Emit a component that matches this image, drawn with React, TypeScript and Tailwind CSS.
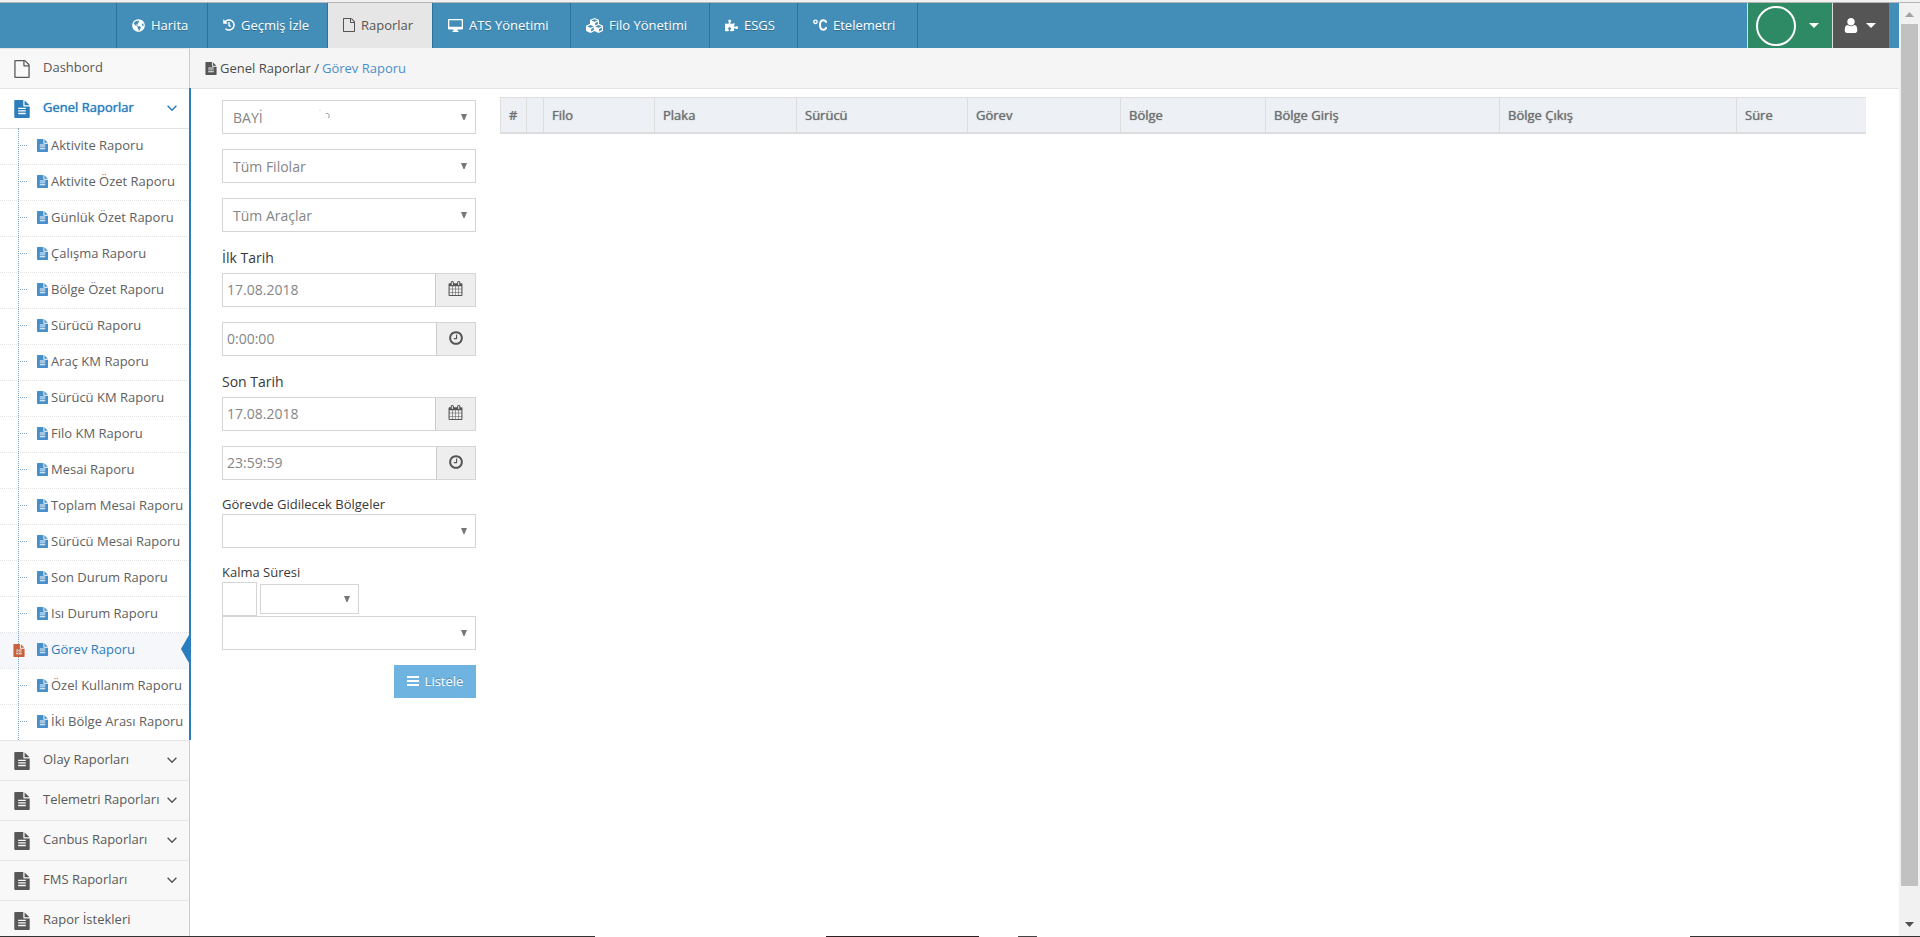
import { useState } from "react";
import type { ReactNode } from "react";
import clsx from "clsx";
import { FaCubes, FaGlobeAmericas, FaHistory, FaPuzzlePiece } from "react-icons/fa";

const paths = {
  fileText:
    "M1596 476q14 14 28 36h-472v-472q22 14 36 28zm-476 164h544v1056q0 40-28 68t-68 28h-1344q-40 0-68-28t-28-68v-1600q0-40 28-68t68-28h800v544q0 40 28 68t68 28zm160 736v-64q0-14-9-23t-23-9h-704q-14 0-23 9t-9 23v64q0 14 9 23t23 9h704q14 0 23-9t9-23zm0-256v-64q0-14-9-23t-23-9h-704q-14 0-23 9t-9 23v64q0 14 9 23t23 9h704q14 0 23-9t9-23zm0-256v-64q0-14-9-23t-23-9h-704q-14 0-23 9t-9 23v64q0 14 9 23t23 9h704q14 0 23-9t9-23z",
  file: "M1596 380q28 28 48 76t20 88v1152q0 40-28 68t-68 28h-1344q-40 0-68-28t-28-68v-1600q0-40 28-68t68-28h896q40 0 88 20t76 48zm-444-244v376h376q-10-29-22-41l-313-313q-12-12-41-22zm384 1528v-1024h-416q-40 0-68-28t-28-68v-416h-768v1536h1280z",
  calendar:
    "M192 1664h288v-288h-288v288zm352 0h320v-288h-320v288zm-352-352h288v-320h-288v320zm352 0h320v-320h-320v320zm-352-384h288v-288h-288v288zm736 736h320v-288h-320v288zm-384-736h320v-288h-320v288zm768 736h288v-288h-288v288zm-384-352h320v-320h-320v320zm-352-864v-288q0-13-9.5-22.5t-22.5-9.5h-64q-13 0-22.5 9.5t-9.5 22.5v288q0 13 9.5 22.5t22.5 9.5h64q13 0 22.5-9.5t9.5-22.5zm736 864h288v-320h-288v320zm-384-384h320v-288h-320v288zm384 0h288v-288h-288v288zm32-480v-288q0-13-9.5-22.5t-22.5-9.5h-64q-13 0-22.5 9.5t-9.5 22.5v288q0 13 9.5 22.5t22.5 9.5h64q13 0 22.5-9.5t9.5-22.5zm384-64v1280q0 52-38 90t-90 38h-1408q-52 0-90-38t-38-90v-1280q0-52 38-90t90-38h128v-96q0-66 47-113t113-47h64q66 0 113 47t47 113v96h384v-96q0-66 47-113t113-47h64q66 0 113 47t47 113v96h128q52 0 90 38t38 90z",
  clock:
    "M1024 544v448q0 14-9 23t-23 9h-320q-14 0-23-9t-9-23v-64q0-14 9-23t23-9h224v-352q0-14 9-23t23-9h64q14 0 23 9t9 23zm416 352q0-148-73-273t-198-198-273-73-273 73-198 198-73 273 73 273 198 198 273 73 273-73 198-198 73-273zm224 0q0 209-103 385.5t-279.5 279.5-385.5 103-385.5-103-279.5-279.5-103-385.5 103-385.5 279.5-279.5 385.5-103 385.5 103 279.5 279.5 103 385.5z",
  user: "M1536 1399q0 109-62.5 187t-150.5 78h-854q-88 0-150.5-78t-62.5-187q0-85 8.5-160.5t31.5-152 58.5-131 94-89 134.5-34.5q131 128 313 128t313-128q76 0 134.5 34.5t94 89 58.5 131 31.5 152 8.5 160.5zm-256-887q0 159-112.5 271.5t-271.5 112.5-271.5-112.5-112.5-271.5 112.5-271.5 271.5-112.5 271.5 112.5 112.5 271.5z",
};

function Icon({ name, className, viewBox = "0 0 1792 1792" }: { name: keyof typeof paths; className: string; viewBox?: string }) {
  return (
    <svg viewBox={viewBox} fill="currentColor" className={clsx("shrink-0", className)} aria-hidden="true">
      <path d={paths[name]} />
    </svg>
  );
}

// file glyphs only fill the middle of the em square
const fileBox = "128 0 1536 1792";

const navItems: { label: string; width: string; icon: ReactNode; active?: boolean }[] = [
  { label: "Harita", width: "w-[91px]", icon: <FaGlobeAmericas className="size-[13px] shrink-0" /> },
  { label: "Geçmiş İzle", width: "w-[120px]", icon: <FaHistory className="size-3 shrink-0" /> },
  {
    label: "Raporlar",
    width: "w-[105px]",
    icon: <Icon name="file" viewBox={fileBox} className="h-[14px] w-3" />,
    active: true,
  },
  {
    label: "ATS Yönetimi",
    width: "w-[138px]",
    icon: (
      <svg viewBox="0 0 15 13" className="h-[13px] w-[15px] shrink-0" fill="currentColor" aria-hidden="true">
        <path fillRule="evenodd" d="M1 0h13a1 1 0 0 1 1 1v8.500a1 1 0 0 1-1 1H9.500V12h1v1h-6v-1h1v-1.500H1a1 1 0 0 1-1-1V1a1 1 0 0 1 1-1zm.300 1.300v6.400h12.400V1.300z" />
      </svg>
    ),
  },
  { label: "Filo Yönetimi", width: "w-[139px]", icon: <FaCubes className="size-[17px] shrink-0" /> },
  { label: "ESGS", width: "w-[88px]", icon: <FaPuzzlePiece className="size-[13px] shrink-0" /> },
  {
    label: "Etelemetri",
    width: "w-[120px]",
    icon: (
      <svg viewBox="0 0 14 12" className="h-3 w-[14px] shrink-0" fill="none" stroke="currentColor" aria-hidden="true">
        <circle cx="2.500" cy="2.800" r="1.700" strokeWidth="1.400" />
        <path d="M13.400 3.800V1.700M13.300 3.600C12.800 2.200 11.800 1.300 10.300 1.300C8.200 1.300 7 3 7 6s1.200 4.700 3.300 4.700c1.600 0 2.700-1 3.200-2.600" strokeWidth="2" />
      </svg>
    ),
  },
];

const generalReports = [
  "Aktivite Raporu",
  "Aktivite Özet Raporu",
  "Günlük Özet Raporu",
  "Çalışma Raporu",
  "Bölge Özet Raporu",
  "Sürücü Raporu",
  "Araç KM Raporu",
  "Sürücü KM Raporu",
  "Filo KM Raporu",
  "Mesai Raporu",
  "Toplam Mesai Raporu",
  "Sürücü Mesai Raporu",
  "Son Durum Raporu",
  "Isı Durum Raporu",
  "Görev Raporu",
  "Özel Kullanım Raporu",
  "İki Bölge Arası Raporu",
];

const otherMenus = [
  { label: "Olay Raporları", expandable: true },
  { label: "Telemetri Raporları", expandable: true },
  { label: "Canbus Raporları", expandable: true },
  { label: "FMS Raporları", expandable: true },
  { label: "Rapor İstekleri", expandable: false },
];

const columns = [
  { label: "#", width: "w-[26px]" },
  { label: "", width: "w-[17px]" },
  { label: "Filo", width: "w-[111px]" },
  { label: "Plaka", width: "w-[142px]" },
  { label: "Sürücü", width: "w-[171px]" },
  { label: "Görev", width: "w-[153px]" },
  { label: "Bölge", width: "w-[145px]" },
  { label: "Bölge Giriş", width: "w-[234px]" },
  { label: "Bölge Çıkış", width: "w-[237px]" },
  { label: "Süre", width: "w-[130px]" },
];

function Caret() {
  return (
    <svg viewBox="0 0 10 5" className="h-[5px] w-[10px]" fill="currentColor" aria-hidden="true">
      <path d="M0 0h10L5 5z" />
    </svg>
  );
}

function Chevron() {
  return (
    <svg viewBox="0 0 10 7" className="h-[7px] w-[10px] shrink-0" fill="none" stroke="currentColor" strokeWidth="1.500" aria-hidden="true">
      <path d="M.6.8 5 5.300 9.400.8" />
    </svg>
  );
}

function TopNav() {
  return (
    <header className="flex h-[45px] shrink-0 bg-[#438eb9] text-[13px] text-white">
      <nav className="ml-[116px] flex border-r border-[#2c7196]">
        {navItems.map((item) => (
          <a
            key={item.label}
            href="#"
            className={clsx(
              "flex items-center gap-[6px] border-l border-[#2c7196] pb-px pl-[15px] whitespace-nowrap",
              item.width,
              item.active ? "bg-[#e6e6e6] text-[#555]" : "[text-shadow:0_1px_0_rgba(0,0,0,0.25)]",
            )}
          >
            {item.icon}
            {item.label}
          </a>
        ))}
      </nav>
      <div className="ml-auto flex pr-[10px]">
        <button aria-label="Firma" className="flex w-[85px] items-center gap-[13px] border-l border-[#ddd] bg-[#2e8965] pl-2">
          <span className="size-10 rounded-full border-2 border-white" />
          <Caret />
        </button>
        <button aria-label="Kullanıcı" className="flex w-[57px] items-center gap-2 border-l border-[#ddd] bg-[#555] pl-[11px]">
          <Icon name="user" viewBox="256 128 1280 1536" className="h-[15px] w-[14px]" />
          <Caret />
        </button>
      </div>
    </header>
  );
}

function Sidebar() {
  const [open, setOpen] = useState(true);

  return (
    <aside className="z-10 w-[191px] shrink-0 text-[13px] text-[#585858]">
      <a href="#" className="flex h-10 w-[190px] items-center gap-[13px] border-t border-r border-t-[#e5e5e5] border-r-[#ccc] bg-[#f8f8f8] pl-[14px]">
        <Icon name="file" viewBox={fileBox} className="h-[18px] w-4" />
        <span className="pb-[3px]">Dashbord</span>
      </a>
      <div className="border-r-2 border-[#2b7dbc] bg-white">
        <button
          onClick={() => setOpen(!open)}
          className="flex h-10 w-full items-center gap-[13px] border-t border-[#e5e5e5] pr-3 pl-[14px] text-[#2b7dbc]"
        >
          <Icon name="fileText" viewBox={fileBox} className="h-[18px] w-4" />
          <span className="flex-1 pb-[3px] text-left [text-shadow:0_0_1px_currentColor]">Genel Raporlar</span>
          <Chevron />
        </button>
        {open && (
          <ul className="relative">
            {generalReports.map((label, i) => {
              const active = label === "Görev Raporu";
              return (
                <li key={label} className={clsx("relative border-t border-[#e2e2e2]", i > 0 && "border-dotted")}>
                  <a
                    href="#"
                    className={clsx(
                      "flex h-[35px] items-center gap-[3px] pb-[3px] pl-[37px] whitespace-nowrap",
                      active ? "bg-[#f5f7fb] text-[#2b7dbc]" : "text-[#616161]",
                    )}
                  >
                    <Icon name="fileText" viewBox={fileBox} className="h-[13px] w-[11px] text-[#478fca]" />
                    {label}
                  </a>
                  {active ? (
                    <>
                      <Icon name="fileText" viewBox={fileBox} className="absolute top-[11px] left-[13px] z-10 h-[13px] w-3 text-[#c86139]" />
                      <svg viewBox="0 0 8 28" className="absolute top-[2px] right-0 h-7 w-2" fill="#2b7dbc" aria-hidden="true">
                        <path d="M8 0v28L0 14z" />
                      </svg>
                    </>
                  ) : (
                    <span className="absolute top-4 left-5 w-[7px] border-t border-dotted border-[#7aa3c4]" />
                  )}
                </li>
              );
            })}
            <li aria-hidden="true" className="absolute inset-y-0 left-[18px] border-l border-dotted border-[#7aa3c4]" />
          </ul>
        )}
      </div>
      {otherMenus.map((menu) => (
        <a
          key={menu.label}
          href="#"
          className="flex h-10 w-[190px] items-center gap-[13px] border-t border-r border-t-[#e5e5e5] border-r-[#ccc] bg-[#f8f8f8] pr-3 pl-[14px]"
        >
          <Icon name="fileText" viewBox={fileBox} className="h-[18px] w-4" />
          <span className="w-0 flex-1 pb-[3px] whitespace-nowrap">{menu.label}</span>
          {menu.expandable && <Chevron />}
        </a>
      ))}
    </aside>
  );
}

function SelectBox({ label, value, small = false, children }: { label: string; value?: string; small?: boolean; children?: ReactNode }) {
  return (
    <div className={clsx("relative", small ? "h-[30px] w-[99px]" : "h-[34px] w-full")}>
      <select
        aria-label={label}
        className="size-full appearance-none border border-[#d5d5d5] bg-white px-[10px] pt-[2px] text-sm text-[#858585]"
      >
        <option>{value}</option>
      </select>
      <svg viewBox="0 0 6 6" className={clsx("pointer-events-none absolute right-[9px] size-[6px]", small ? "top-3" : "top-[14px]")} fill="#777" aria-hidden="true">
        <path d="M0 0h6L3.500 6h-1z" />
      </svg>
      {children}
    </div>
  );
}

function PickerInput({ id, value, icon, label }: { id: string; value: string; icon: "calendar" | "clock"; label?: string }) {
  return (
    <div className="flex h-[34px] border border-[#d5d5d5]">
      <input id={id} aria-label={label} defaultValue={value} className="w-0 flex-1 bg-white px-1 text-sm text-[#858585]" />
      <button
        aria-label="Seç"
        className={clsx(
          "flex items-center justify-center border-l border-[#ccc] bg-[#eee] pb-[3px] text-[#555]",
          icon === "clock" ? "w-[39px]" : "w-10",
        )}
      >
        <Icon name={icon} className={icon === "clock" ? "size-4" : "size-[15px]"} />
      </button>
    </div>
  );
}

function FilterForm() {
  return (
    <form className="w-[254px] shrink-0 pt-[3px] text-[#393939]" onSubmit={(e) => e.preventDefault()}>
      <div className="flex flex-col gap-[15px]">
        <SelectBox label="Bayi" value="BAYİ">
          <svg viewBox="0 0 12 8" className="pointer-events-none absolute top-[10px] left-[97px] h-2 w-3" fill="none" stroke="#999" aria-hidden="true">
            <path d="M0 .5h2" strokeOpacity=".3" />
            <path d="M7 3.500c3-.5 4 1.500 2.500 4.500" />
          </svg>
        </SelectBox>
        <SelectBox label="Filo" value="Tüm Filolar" />
        <SelectBox label="Araç" value="Tüm Araçlar" />
      </div>
      <label htmlFor="startDate" className="mt-4 block pb-[5px] text-sm leading-5">İlk Tarih</label>
      <div className="flex flex-col gap-[15px]">
        <PickerInput id="startDate" value="17.08.2018" icon="calendar" />
        <PickerInput id="startTime" value="0:00:00" icon="clock" label="İlk saat" />
      </div>
      <label htmlFor="endDate" className="mt-4 block pb-[5px] text-sm leading-5">Son Tarih</label>
      <div className="flex flex-col gap-[15px]">
        <PickerInput id="endDate" value="17.08.2018" icon="calendar" />
        <PickerInput id="endTime" value="23:59:59" icon="clock" label="Son saat" />
      </div>
      <p className="mt-[14px] text-[13px] leading-5">Görevde Gidilecek Bölgeler</p>
      <SelectBox label="Görevde Gidilecek Bölgeler" />
      <label htmlFor="duration" className="mt-[14px] block text-[13px] leading-5">Kalma Süresi</label>
      <div className="flex items-center gap-[3px]">
        <input id="duration" className="h-[34px] w-[35px] border border-[#d5d5d5] bg-white px-1 text-sm" />
        <SelectBox label="Süre birimi" small />
      </div>
      <SelectBox label="Süre koşulu" />
      <button className="mt-[15px] ml-auto flex h-[33px] w-[82px] items-center justify-center gap-[6px] bg-[#6fb3e0] pb-px text-[13px] text-white [text-shadow:0_-1px_0_rgba(0,0,0,0.25)]">
        <svg viewBox="0 0 12 10" className="h-[10px] w-3" fill="currentColor" aria-hidden="true">
          <path d="M0 0h12v2H0zM0 4h12v2H0zM0 8h12v2H0z" />
        </svg>
        Listele
      </button>
    </form>
  );
}

function ReportTable() {
  return (
    <div className="min-w-0 flex-1">
      <table className="w-full table-fixed border-separate border-spacing-0 text-[13px] text-[#707070]">
        <thead>
          <tr>
            {columns.map((col, i) => (
              <th
                key={i}
                scope="col"
                className={clsx(
                  "h-[37px] border-t border-b-2 border-l border-[#ddd] bg-[#edf1f6] p-0 pl-2 text-left font-normal whitespace-nowrap [text-shadow:0_0_1px_currentColor]",
                  col.width,
                )}
              >
                {col.label}
              </th>
            ))}
          </tr>
        </thead>
        <tbody />
      </table>
    </div>
  );
}

function ScrollTrack() {
  return (
    <div aria-hidden="true" className="flex w-[21px] shrink-0 flex-col items-center bg-[#f1f1f1]">
      <svg viewBox="0 0 9 5" className="mt-[9px] h-[5px] w-[9px]" fill="#a3a3a3">
        <path d="M4.500 0 9 5H0z" />
      </svg>
      <div className="mt-[7px] mb-9 w-[17px] flex-1 bg-[#c1c1c1]" />
      <svg viewBox="0 0 9 5" className="mb-[9px] h-[5px] w-[9px]" fill="#505050">
        <path d="M0 0h9L4.500 5z" />
      </svg>
    </div>
  );
}

export default function App() {
  return (
    <div className="flex h-screen flex-col overflow-hidden bg-white font-['Open_Sans',sans-serif] leading-5">
      <div className="h-[3px] shrink-0 border-b border-[#b5b5b5] bg-[#f1f1f1]" />
      <div className="flex min-h-0 flex-1">
        <div className="flex min-w-0 flex-1 flex-col">
          <TopNav />
          <div className="flex min-h-0 flex-1 overflow-hidden">
            <Sidebar />
            <main className="-ml-px min-w-0 flex-1">
              <div className="flex h-[41px] items-center gap-[3px] border-b border-[#e5e5e5] bg-[#f5f5f5] pl-[15px] text-[13px] text-[#4c4c4c]">
                <Icon name="fileText" viewBox={fileBox} className="h-[13px] w-3 text-[#555]" />
                <span>Genel Raporlar /</span>
                <a href="#" className="text-[#4c8fcb]">Görev Raporu</a>
              </div>
              <div className="flex gap-6 pt-2 pr-[33px] pl-8">
                <FilterForm />
                <ReportTable />
              </div>
            </main>
          </div>
        </div>
        <ScrollTrack />
      </div>
      <div className="flex h-px shrink-0">
        <div className="w-[31%] bg-[#333]" />
        <div className="ml-[12%] w-[8%] bg-[#2d2022]" />
        <div className="ml-[2%] w-[1%] bg-[#444]" />
        <div className="ml-auto w-[12%] bg-[#333]" />
      </div>
    </div>
  );
}
